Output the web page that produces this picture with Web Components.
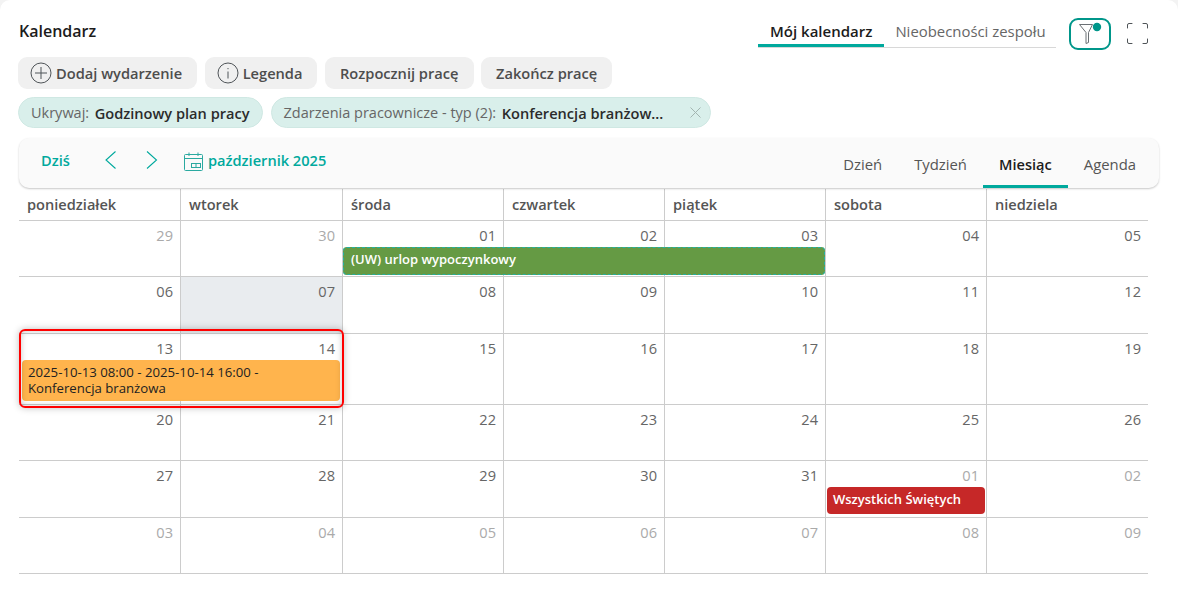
<!DOCTYPE html>
<html lang="pl">
<title>Kalendarz</title>
<meta charset=utf-8>
<style>
html, body { margin: 0; height: 100%; }
body { background: #f3f3f3; font-family: "Open Sans", "Liberation Sans", sans-serif; }
</style>
<cal-page>
    <page-header></page-header>
    <action-bar>
        <action-button icon="plus">Dodaj wydarzenie</action-button>
        <action-button icon="info">Legenda</action-button>
        <action-button>Rozpocznij pracę</action-button>
        <action-button>Zakończ pracę</action-button>
    </action-bar>
    <filter-bar>
        <filter-chip label="Ukrywaj:" value="Godzinowy plan pracy"></filter-chip>
        <filter-chip label="Zdarzenia pracownicze - typ (2):" value="Konferencja branżow..." closable></filter-chip>
    </filter-bar>
    <cal-toolbar></cal-toolbar>
    <month-grid></month-grid>
</cal-page>
<script>
const COLUMNS = '161px 162px 161px 161px 161px 161px 1fr';

customElements.define('cal-page', class extends HTMLElement {
    constructor() {
        super();
        this.attachShadow({mode: 'open'}).innerHTML = `<style>
            :host { display: block; box-sizing: border-box; height: 594px; overflow: hidden; background: #fff;
                border-radius: 10px 10px 0 0; padding: 18px 19px 0 18px; }
        </style><slot></slot>`;
    }
});

customElements.define('page-header', class extends HTMLElement {
    constructor() {
        super();
        this.attachShadow({mode: 'open'}).innerHTML = `<style>
            :host { display: flex; align-items: flex-start; height: 39px; }
            h1 { margin: 3px 0 0 1px; font: 600 16px/20px "Open Sans", sans-serif; color: #1c1c1c; flex: 1; }
            .tabs { display: flex; width: 298px; height: 29px; border-bottom: 1px solid #d8d8d8; box-sizing: content-box; }
            .tab { font-size: 14.9px; line-height: 20px; padding: 3px 11px 0; color: #666; height: 25px; box-sizing: border-box; white-space: nowrap; }
            .tab.on { font-size: 15px; padding: 3px 12px 0; font-weight: 600; color: #1c1c1c; height: 29px; border-bottom: 3px solid #00a99d; box-sizing: border-box; }
            .filter { margin-left: 13px; width: 42px; height: 32px; box-sizing: border-box; border: 2px solid #00968a; border-radius: 9px; display: block; }
            .full { margin: 5px 11px 0 16px; display: block; }
        </style>
        <h1>Kalendarz</h1>
        <div class="tabs"><div class="tab on">Mój kalendarz</div><div class="tab">Nieobecności zespołu</div></div>
        <div class="filter"><svg width="38" height="28" viewBox="0 0 38 28" style="display:block">
            <path d="M8.5 4.5H21.5L17.5 12.5V22.5L15 23.5V12.5Z" fill="none" stroke="#6b7074" stroke-width="1" stroke-linejoin="round"/>
            <circle cx="26" cy="7" r="4.2" fill="#00968a"/></svg></div>
        <svg class="full" width="21" height="21" viewBox="0 0 21 21" fill="none" stroke="#4f5458" stroke-width="1" stroke-linecap="round">
            <path d="M.5 5V2Q.5.5 2 .5H5M16 .5h3q1.5 0 1.5 1.5V5M.5 16v3q0 1.5 1.5 1.5H5M16 20.5h3q1.5 0 1.5-1.5V16"/></svg>`;
    }
});

customElements.define('action-bar', class extends HTMLElement {
    constructor() {
        super();
        this.attachShadow({mode: 'open'}).innerHTML = `<style>
            :host { display: flex; gap: 7.5px; height: 32px; }
        </style><slot></slot>`;
    }
});

const ICONS = {
    plus: '<path d="M11 5v12M5 11h12"/>',
    info: '<path d="M11 9.5V16.5M11 6v1.2"/>'
};
customElements.define('action-button', class extends HTMLElement {
    constructor() {
        super();
        const icon = ICONS[this.getAttribute('icon')];
        this.attachShadow({mode: 'open'}).innerHTML = `<style>
            :host { display: flex; align-items: center; gap: 4px; height: 32px; box-sizing: border-box; padding: 0 15px;
                background: #f0f0f0; border-radius: 9px; font-size: 14.65px; font-weight: 600; color: #4d4d4d; white-space: nowrap; }
            :host([icon]) { padding: 0 15px 0 12px; }
            svg { display: block; }
        </style>${icon ? `<svg width="22" height="22" viewBox="0 0 22 22" fill="none" stroke="#4f5458" stroke-width="1"><circle cx="11" cy="11" r="10"/>${icon}</svg>` : ''}<slot></slot>`;
    }
});

customElements.define('filter-bar', class extends HTMLElement {
    constructor() {
        super();
        this.attachShadow({mode: 'open'}).innerHTML = `<style>
            :host { display: flex; gap: 8px; margin-top: 8px; height: 31px; }
        </style><slot></slot>`;
    }
});

customElements.define('filter-chip', class extends HTMLElement {
    constructor() {
        super();
        const closable = this.hasAttribute('closable');
        this.attachShadow({mode: 'open'}).innerHTML = `<style>
            :host { display: flex; align-items: center; height: 31px; box-sizing: border-box; padding: 0 12px;
                background: #d9efeb; border: 1px solid #cfe8e3; border-radius: 16px; font-size: 14.5px; white-space: nowrap; }
            .l { color: #666; margin-right: 5.5px; }
            .v { color: #2b2b2b; font-weight: 600; font-size: 14.6px; }
            svg { display: block; margin: 0 -3px 0 26.5px; }
        </style><span class="l">${this.getAttribute('label')}</span><span class="v">${this.getAttribute('value')}</span>
        ${closable ? '<svg width="11" height="11" viewBox="0 0 11 11" stroke="#a3b5b1" stroke-width="1"><path d="M.5.5l10 10M10.5.5l-10 10"/></svg>' : ''}`;
    }
});

customElements.define('cal-toolbar', class extends HTMLElement {
    constructor() {
        super();
        const views = ['Dzień', 'Tydzień', 'Miesiąc', 'Agenda'];
        this.attachShadow({mode: 'open'}).innerHTML = `<style>
            :host { display: flex; align-items: stretch; height: 50px; margin: 10px 0 0 1px; position: relative; z-index: 1;
                background: #fafafa; border-radius: 10px; box-shadow: 0 1px 2px rgba(0,0,0,.22); box-sizing: border-box; color: #00a99d; font-weight: 600; font-size: 14.6px; }
            .nav { display: flex; align-items: center; flex: 1; padding: 0 0 7px 22px; }
            .today { width: 64px; }
            .chev { display: block; }
            .next { margin-left: 29px; }
            .cal { margin: 3px 4px 0 26px; display: block; }
            .views { display: flex; padding-right: 7px; }
            .view { padding: 13px 16px 0; height: 50px; box-sizing: border-box; line-height: 26px; font-size: 14.85px; font-weight: 400; color: #555; white-space: nowrap; }
            .view.on { font-size: 14.6px; font-weight: 600; color: #1c1c1c; border-bottom: 3px solid #00a99d; }
        </style>
        <div class="nav">
            <span class="today">Dziś</span>
            <svg class="chev" width="12" height="18" viewBox="0 0 12 18" fill="none" stroke="#00a99d" stroke-width="1.1"><path d="M11 .5L1.5 9 11 17.5" transform="translate(-.5 0)"/></svg>
            <svg class="chev next" width="12" height="18" viewBox="0 0 12 18" fill="none" stroke="#00a99d" stroke-width="1.1"><path d="M1 .5L10.5 9 1 17.5"/></svg>
            <svg class="cal" width="20" height="19" viewBox="0 0 20 19" fill="none" stroke="#2aa9a0" stroke-width="1"><rect x=".5" y="2.5" width="18" height="16" rx="1"/><path d="M.5 6.5h18M5 .5v3.5M14 .5v3.5"/><rect x="7.5" y="11.5" width="9" height="4" stroke-width="1"/><path d="M12 11.5v4"/></svg>
            <span>październik 2025</span>
        </div>
        <div class="views">${views.map(v => `<div class="view${v == 'Miesiąc' ? ' on' : ''}">${v}</div>`).join('')}</div>`;
    }
});

customElements.define('month-grid', class extends HTMLElement {
    constructor() {
        super();
        const names = ['poniedziałek', 'wtorek', 'środa', 'czwartek', 'piątek', 'sobota', 'niedziela'];
        this.attachShadow({mode: 'open'}).innerHTML = `<style>
            :host { display: block; margin-left: 1px; width: 1129px; }
            .head { display: grid; grid-template-columns: ${COLUMNS}; border-bottom: 1px solid #ccc; height: 31px; margin-top: 1px; }
            .head div { font-size: 14.6px; font-weight: 600; color: #555; line-height: 31px; padding-left: 8px; border-left: 1px solid #ccc; }
            .head div:first-child { border-left: 0; }
        </style>
        <div class="head">${names.map(n => `<div>${n}</div>`).join('')}</div>
        <week-row h="56" days="29,30,01,02,03,04,05" muted="0,1" event='{"start":3,"span":3,"text":"(UW) urlop wypoczynkowy","kind":"leave"}'></week-row>
        <week-row h="57" days="06,07,08,09,10,11,12" today="1"></week-row>
        <week-row h="71" days="13,14,15,16,17,18,19" mark event='{"start":1,"span":2,"text":"2025-10-13 08:00 - 2025-10-14 16:00 - Konferencja branżowa","kind":"conf"}'></week-row>
        <week-row h="56" days="20,21,22,23,24,25,26"></week-row>
        <week-row h="57" days="27,28,29,30,31,01,02" muted="5,6" event='{"start":6,"span":1,"text":"Wszystkich Świętych","kind":"holiday"}'></week-row>
        <week-row h="56" days="03,04,05,06,07,08,09" muted="0,1,2,3,4,5,6"></week-row>`;
    }
});

customElements.define('week-row', class extends HTMLElement {
    constructor() {
        super();
        const days = this.getAttribute('days').split(',');
        const muted = (this.getAttribute('muted') || '').split(',');
        const today = this.getAttribute('today');
        const ev = JSON.parse(this.getAttribute('event') || 'null');
        this.attachShadow({mode: 'open'}).innerHTML = `<style>
            :host { display: grid; position: relative; grid-template-columns: ${COLUMNS}; grid-template-rows: 26px 1fr;
                height: ${this.getAttribute('h')}px; box-sizing: border-box; border-bottom: 1px solid #ccc; }
            .day { grid-row: 1 / 3; border-left: 1px solid #ccc; text-align: right; padding-right: 7px; font-size: 14.6px; line-height: 20px; padding-top: 4px; color: #666; box-sizing: border-box; }
            .day:first-of-type { border-left: 0; }
            .day.muted { color: #aaa; }
            .day.today { background: #e9ecef; }
            .ev { grid-row: 2; z-index: 1; box-sizing: border-box; border-radius: 4px; font-size: 13px; line-height: 16px; align-self: start; }
            .leave { margin: 0 0 0 1px; height: 28px; background: #659a44; color: #fff; font-weight: 600; padding: 4px 8px; outline: 1px dashed #23b0a4; outline-offset: -1px; }
            .holiday { margin: 0 1px 0 2px; height: 27px; background: #c62828; color: #fff; font-weight: 600; padding: 4px 6px; }
            .conf { margin: 0 2px 0 3px; height: 41px; background: #ffb44d; color: #222; padding: 4px 6px; font-size: 13.2px; }
            .mark { position: absolute; z-index: 2; left: 0; top: -5px; width: 325px; height: 79px; box-sizing: border-box; border: 2px solid #f00; border-radius: 6px; box-shadow: 0 0 7px rgba(0,0,0,.25), inset 0 0 6px rgba(0,0,0,.22); pointer-events: none; }
        </style>
        ${days.map((d, i) => `<div class="day${muted.includes(String(i)) ? ' muted' : ''}${today == i ? ' today' : ''}" style="grid-column:${i + 1}">${d}</div>`).join('')}
        ${ev ? `<div class="ev ${ev.kind}" style="grid-column:${ev.start}/span ${ev.span}">${ev.text}</div>` : ''}
        ${this.hasAttribute('mark') ? '<div class="mark"></div>' : ''}`;
    }
});
</script>
</html>
